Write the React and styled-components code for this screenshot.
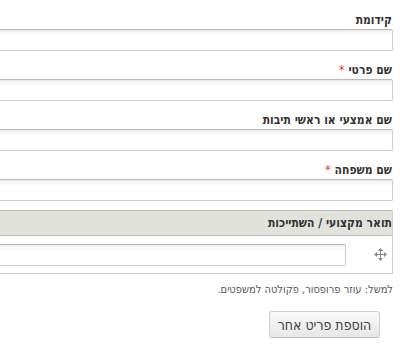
import React from "react";
import styled, { createGlobalStyle } from "styled-components";

const Global = createGlobalStyle`
  html, body { margin: 0; padding: 0; background: #fff; overflow: hidden; }
  body { direction: rtl; font-family: "DejaVu Sans Condensed", "DejaVu Sans", sans-serif; color: #333; }
`;

const Page = styled.div`
  width: 400px;
  height: 355px;
  overflow: hidden;
  padding: 11px 7px 0 0;
  box-sizing: border-box;
  display: flex;
  flex-direction: column;
  align-items: flex-start;
`;

const Field = styled.div`
  width: calc(100% + 20px);
  margin-bottom: 10px;
  display: flex;
  flex-direction: column;
`;

const Label = styled.label`
  font-size: 12px;
  font-weight: bold;
  line-height: 18px;
  color: #333;
  padding-right: 1px;
`;

const Req = styled.span`
  color: #e32;
  font-weight: normal;
  margin-right: 4px;
`;

const Input = styled.input`
  box-sizing: border-box;
  width: ${(p) => p.$w || "100%"};
  height: 22px;
  border: 1px solid #ccc;
  border-top-color: #bbb;
  border-radius: 2px;
  background: linear-gradient(#f2f2f2, #fff 6px);
  box-shadow: inset 0 1px 1px rgba(0, 0, 0, 0.04);
  padding: 2px 4px;
  font: inherit;
  outline: none;
`;

const Table = styled.div`
  width: calc(100% + 20px);
  border: 1px solid #cfcfca;
  border-left: none;
  margin-top: -1px;
  box-sizing: border-box;
`;

const Head = styled.div`
  height: 24px;
  background: #e1e2dc;
  border-top: 1px solid #bebfb9;
  border-bottom: 1px solid #bebfb9;
  margin-top: -1px;
  font-size: 12px;
  font-weight: bold;
  line-height: 24px;
  color: #333;
`;

const Row = styled.div`
  height: 37px;
  display: flex;
  align-items: center;
  background: #fff;
`;

const Handle = styled.div`
  width: 24px;
  display: flex;
  justify-content: center;
  flex-shrink: 0;
  margin-left: 22px;
`;

const Desc = styled.div`
  font-size: 11px;
  color: #555;
  margin-top: 9px;
  line-height: 14px;
`;

const Button = styled.button`
  margin-top: 14px;
  margin-right: 13px;
  height: 27px;
  width: 111px;
  border: 1px solid #d0d0d0;
  border-bottom-color: #b8b8b8;
  border-radius: 3px;
  background: linear-gradient(#fafafa, #e6e6e6);
  font-family: "DejaVu Sans Condensed", "DejaVu Sans", sans-serif;
  font-size: 14px;
  color: #444;
  padding: 0;
  direction: rtl;
`;

const Move = () => (
  <svg width="13" height="13" viewBox="0 0 13 13">
    <g fill="#888">
      <rect x="6" y="2" width="1" height="9" />
      <rect x="2" y="6" width="9" height="1" />
      <path d="M6.5 0 L9 3 L4 3 Z" />
      <path d="M6.5 13 L9 10 L4 10 Z" />
      <path d="M0 6.5 L3 4 L3 9 Z" />
      <path d="M13 6.5 L10 4 L10 9 Z" />
    </g>
  </svg>
);

export default function App() {
  return (
    <>
      <Global />
      <Page>
        <Field>
          <Label>קידומת</Label>
          <Input />
        </Field>
        <Field>
          <Label>
            שם פרטי<Req>*</Req>
          </Label>
          <Input />
        </Field>
        <Field>
          <Label>שם אמצעי או ראשי תיבות</Label>
          <Input />
        </Field>
        <Field>
          <Label>
            שם משפחה<Req>*</Req>
          </Label>
          <Input />
        </Field>
        <Table>
          <Head>תואר מקצועי / השתייכות</Head>
          <Row>
            <Handle>
              <Move />
            </Handle>
            <Input $w="400px" />
          </Row>
        </Table>
        <Desc>למשל: עוזר פרופסור, פקולטה למשפטים.</Desc>
        <Button>הוספת פריט אחר</Button>
      </Page>
    </>
  );
}
